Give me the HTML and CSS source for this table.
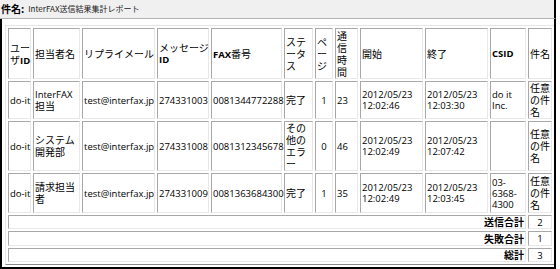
FILE: index.html
```html
<!DOCTYPE html>
<html lang="ja">
<head>
<meta charset="utf-8">
<link rel="stylesheet" href="styles.css">
</head>
<body>
<div class="frame">
  <div class="subject"><span class="lbl">件名:</span><span class="title">InterFAX送信結果集計レポート</span></div>
  <div class="view">
    <table class="report">
      <colgroup>
        <col class="w1"><col class="w2"><col class="w3"><col class="w4"><col class="w5"><col class="w6">
        <col class="w7"><col class="w8"><col class="w9"><col class="w10"><col class="w11"><col class="w12">
      </colgroup>
      <thead>
        <tr class="r-head">
          <th><span class="j">ユー<br>ザ</span><b>ID</b></th>
          <th><span class="j">担当者名</span></th>
          <th><span class="j">リプライメール</span></th>
          <th><span class="j">メッセージ</span><br><b>ID</b></th>
          <th><b>FAX</b><span class="j">番号</span></th>
          <th><span class="j">ステ<br>ータ<br>ス</span></th>
          <th><span class="j">ペ<br>ー<br>ジ</span></th>
          <th><span class="j">通<br>信<br>時<br>間</span></th>
          <th><span class="j">開始</span></th>
          <th><span class="j">終了</span></th>
          <th><b>CSID</b></th>
          <th><span class="j">件名</span></th>
        </tr>
      </thead>
      <tbody>
        <tr class="r1">
          <td>do-it</td>
          <td>InterFAX<br><span class="j">担当</span></td>
          <td>test@interfax.jp</td>
          <td>274331003</td>
          <td>0081344772288</td>
          <td><span class="j">完了</span></td>
          <td class="ctr">1</td>
          <td>23</td>
          <td>2012/05/23<br>12:02:46</td>
          <td>2012/05/23<br>12:03:30</td>
          <td>do it<br>Inc.</td>
          <td><span class="j">任意<br>の件<br>名</span></td>
        </tr>
        <tr class="r2">
          <td>do-it</td>
          <td><span class="j">システム<br>開発部</span></td>
          <td>test@interfax.jp</td>
          <td>274331008</td>
          <td>0081312345678</td>
          <td><span class="j">その<br>他の<br>エラ<br>ー</span></td>
          <td class="ctr">0</td>
          <td>46</td>
          <td>2012/05/23<br>12:02:49</td>
          <td>2012/05/23<br>12:07:42</td>
          <td></td>
          <td><span class="j">任意<br>の件<br>名</span></td>
        </tr>
        <tr class="r3">
          <td>do-it</td>
          <td><span class="j">請求担当<br>者</span></td>
          <td>test@interfax.jp</td>
          <td>274331009</td>
          <td>0081363684300</td>
          <td><span class="j">完了</span></td>
          <td class="ctr">1</td>
          <td>35</td>
          <td>2012/05/23<br>12:02:49</td>
          <td>2012/05/23<br>12:03:45</td>
          <td>03-<br>6368-<br>4300</td>
          <td><span class="j">任意<br>の件<br>名</span></td>
        </tr>
        <tr class="r-sum">
          <td colspan="11" class="lab"><span class="j">送信合計</span></td>
          <td class="ctr">2</td>
        </tr>
        <tr class="r-sum2">
          <td colspan="11" class="lab"><span class="j">失敗合計</span></td>
          <td class="ctr">1</td>
        </tr>
        <tr class="r-sum">
          <td colspan="11" class="lab"><span class="j">総計</span></td>
          <td class="ctr">3</td>
        </tr>
      </tbody>
    </table>
  </div>
</div>
</body>
</html>
```
FILE: styles.css
```css
* { box-sizing: border-box; }

html, body {
  margin: 0;
  background: #fff;
}

body {
  width: 560px;
  height: 269px;
  overflow: hidden;
  font-family: "Open Sans", "Noto Sans CJK JP", sans-serif;
  font-size: 9.5px;
  color: #000;
}

.frame {
  width: 556px;
}

.subject {
  height: 19px;
  background: #f0f0f0;
  border-bottom: 1px solid #b4b4b4;
  border-right: 2px solid #000;
  padding: 0 0 2px 1px;
  display: flex;
  align-items: center;
  gap: 4px;
}

.subject .lbl {
  font-family: "Noto Sans CJK JP", sans-serif;
  font-weight: bold;
  font-size: 10px;
}

.subject .title {
  font-family: "Noto Sans CJK JP", sans-serif;
  font-size: 8px;
  color: #222;
}

.view {
  height: 250px;
  border: 2px solid #000;
  border-top: 0;
  padding: 6px 0 0 3px;
  overflow: hidden;
}

.report {
  border-collapse: separate;
  border-spacing: 2px;
  border: 1px solid;
  border-color: #e6e6e6 #8a8a8a #8a8a8a #e6e6e6;
  table-layout: fixed;
  width: 550px;
}

.report th,
.report td {
  border: 1px solid;
  border-color: #a8a8a8 #e8e8e8 #e8e8e8 #a8a8a8;
  padding: 0 1px;
  font-weight: normal;
  text-align: left;
  vertical-align: middle;
  white-space: nowrap;
  line-height: 11px;
}

.report b { font-weight: bold; }

.j {
  font-family: "Noto Sans CJK JP", sans-serif;
  font-size: 10px;
  line-height: 11px;
}

.report .ctr { text-align: center; }
.report .lab { text-align: right; }
.report .lab .j { font-weight: bold; }

.w1 { width: 23px; }
.w2 { width: 47px; }
.w3 { width: 73px; }
.w4 { width: 52px; }
.w5 { width: 71px; }
.w6 { width: 29px; }
.w7 { width: 18px; }
.w8 { width: 23px; }
.w9 { width: 63px; }
.w10 { width: 63px; }
.w11 { width: 36px; }
.w12 { width: 24px; }

.r-head { height: 51px; }
.r1 { height: 38px; }
.r2 { height: 49px; }
.r3 { height: 40px; }
.r-sum { height: 14px; }
.r-sum2 { height: 15px; }
```
